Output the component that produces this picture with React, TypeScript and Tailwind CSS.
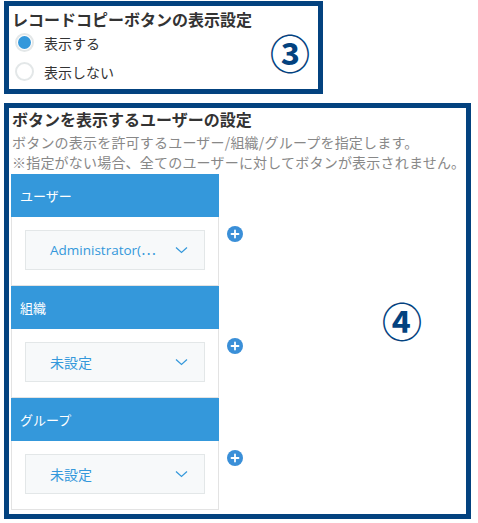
const Radio = ({ checked, label }: { checked?: boolean; label: string }) => (
    <label className="flex items-center h-[19px] ml-[6px]">
        <span className="w-[19px] h-[19px] rounded-full border-2 border-[#e3e7e8] bg-white flex items-center justify-center shrink-0">
            {checked && <span className="w-[13px] h-[13px] rounded-full bg-[#3498db]" />}
        </span>
        <span className="ml-[10px] text-[14px] leading-[20px] text-[#333333]">{label}</span>
    </label>
);

const PlusButton = () => (
    <button className="mt-[52px] ml-[8px] w-[16px] h-[16px] rounded-full bg-[#3a8fd8] flex items-center justify-center">
        <svg width="16" height="16" viewBox="0 0 16 16">
            <path d="M8 4.5v7M4.5 8h7" stroke="#ffffff" strokeWidth="1.8" strokeLinecap="round" />
        </svg>
    </button>
);

const Chevron = () => (
    <svg width="13" height="8" viewBox="0 0 13 8" className="shrink-0">
        <polyline points="1,1.5 6.5,6.5 12,1.5" fill="none" stroke="#3498db" strokeWidth="1.2" />
    </svg>
);

const EntityRow = ({ label, value }: { label: string; value: React.ReactNode }) => (
    <div className="flex items-start">
        <div className="w-[208px]">
            <div className="h-[43px] bg-[#3498db] text-white text-[13px] flex items-center pl-[9px]">
                {label}
            </div>
            <div className="h-[69px] border-x border-b border-[#e3e3e3] pt-[13px] pl-[13px]">
                <div className="w-[180px] h-[40px] bg-[#f7f9fa] border border-[#e3e7e8] flex items-center justify-between pl-[24px] pr-[16px]">
                    <span className="text-[14px] text-[#3498db] whitespace-nowrap">{value}</span>
                    <Chevron />
                </div>
            </div>
        </div>
        <PlusButton />
    </div>
);

export default function App() {
    return (
        <div className="font-['Noto_Sans_CJK_JP',sans-serif] bg-white w-[478px] h-[523px] pl-[4px] pt-[1px]">
            {/* ③ Record copy button display */}
            <section className="relative w-[319px] h-[93px] border-[5px] border-[#03427f] pt-[3px]">
                <h2 className="pl-[3px] text-[16px] leading-[20px] font-bold text-[#333333]">
                    レコードコピーボタンの表示設定
                </h2>
                <div className="mt-[4px] flex flex-col gap-[10px]">
                    <Radio checked label="表示する" />
                    <Radio label="表示しない" />
                </div>
                <span className="absolute left-[259px] top-[24px] w-[44px] h-[44px] flex items-center justify-center text-[40px] font-bold text-[#03427f] leading-none">
                    ③
                </span>
            </section>

            {/* ④ Users allowed to see the button */}
            <section className="relative mt-[9px] w-[467px] border-[5px] border-[#03427f] pl-[2px] pb-[4px]">
                <h2 className="pl-[1px] text-[16px] leading-[22px] font-bold text-[#333333]">
                    ボタンを表示するユーザーの設定
                </h2>
                <p className="mt-[2px] pl-[1px] text-[14px] leading-[20px] text-[#888888] whitespace-nowrap tracking-[0.2px]">
                    ボタンの表示を許可するユーザー/組織/グループを指定します。
                    <br />
                    ※指定がない場合、全てのユーザーに対してボタンが表示されません。
                </p>
                <div className="mt-[2px] flex flex-col">
                    <EntityRow
                        label="ユーザー"
                        value={
                            <>
                                <span className="font-['Open_Sans',sans-serif] text-[13.5px]">Administrator(</span>⋯
                            </>
                        }
                    />
                    <EntityRow label="組織" value="未設定" />
                    <EntityRow label="グループ" value="未設定" />
                </div>
                <span className="absolute left-[371px] top-[190px] w-[44px] h-[44px] flex items-center justify-center text-[40px] font-bold text-[#03427f] leading-none">
                    ④
                </span>
            </section>
        </div>
    );
}
